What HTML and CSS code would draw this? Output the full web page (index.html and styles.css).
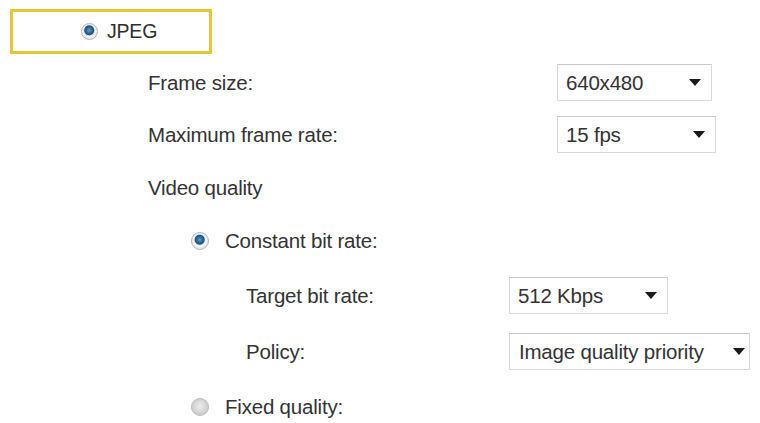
FILE: index.html
```html
<!DOCTYPE html>
<html>
<head>
  <meta charset="utf-8">
  <meta name="viewport" content="width=device-width, initial-scale=1">
  <title>Video settings</title>
  <link rel="stylesheet" href="styles.css">
</head>
<body>
  <div class="format">
    <span class="radio checked"></span>
    <span class="format-name">JPEG</span>
  </div>

  <div class="settings">
    <div class="field">
      <span class="label">Frame size:</span>
      <div class="select size-sm"><span>640x480</span><i class="arrow"></i></div>
    </div>
    <div class="field field-rate">
      <span class="label">Maximum frame rate:</span>
      <div class="select size-md"><span>15 fps</span><i class="arrow"></i></div>
    </div>
    <div class="heading">Video quality</div>

    <div class="quality">
      <div class="option option-cbr">
        <span class="radio checked"></span>
        <span class="label">Constant bit rate:</span>
      </div>
      <div class="sub">
        <div class="field sub-field">
          <span class="label">Target bit rate:</span>
          <div class="select size-md"><span>512 Kbps</span><i class="arrow"></i></div>
        </div>
        <div class="field sub-field field-policy">
          <span class="label">Policy:</span>
          <div class="select size-lg"><span>Image quality priority</span><i class="arrow"></i></div>
        </div>
      </div>
      <div class="option option-fixed">
        <span class="radio"></span>
        <span class="label">Fixed quality:</span>
      </div>
    </div>
  </div>
</body>
</html>
```

FILE: styles.css
```css
* {
  margin: 0;
  padding: 0;
  box-sizing: border-box;
}

html, body {
  height: 100%;
  overflow: hidden;
}

body {
  background: #fff;
  color: #333;
  font-family: "Liberation Sans", Arial, sans-serif;
  font-size: 20.5px;
  letter-spacing: -0.2px;
}

/* selected format, framed */
.format {
  display: flex;
  align-items: center;
  gap: 9px;
  width: 202px;
  height: 45px;
  margin: 9px 0 0 10px;
  padding-left: 68px;
  border: 3px solid #e7c535;
}

.format-name {
  font-size: 19.5px;
  color: #2e2e2e;
}

/* radio buttons */
.radio {
  display: inline-block;
  width: 18px;
  height: 18px;
  border-radius: 50%;
  border: 1px solid #b9bcc0;
  background: radial-gradient(circle at 50% 45%, #ececec 0, #d4d4d4 55%, #c2c2c2 100%);
  flex-shrink: 0;
}

.radio.checked {
  border-color: #aeb7c0;
  background: radial-gradient(circle at 48% 42%, #5f9cc4 0, #2c6892 3px, #1f5279 4.5px, #e6ebf0 5.5px, #f3f5f7 6.5px, #cdd4db 100%);
}

.format .radio {
  width: 17px;
  height: 17px;
}

/* fields */
.settings {
  padding-left: 148px;
}

.field {
  display: grid;
  grid-template-columns: 409px auto;
  align-items: center;
  margin-top: 10px;
}

.field-rate {
  margin-top: 15px;
}

.heading {
  display: flex;
  align-items: center;
  height: 37px;
  margin-top: 16px;
}

.option {
  display: flex;
  align-items: center;
  gap: 16px;
  margin-left: 43px;
  height: 37px;
}

.option-cbr {
  margin-top: 16px;
}

.option-fixed {
  margin-top: 22px;
  height: 30px;
}

.sub {
  padding-left: 98px;
}

.sub-field {
  grid-template-columns: 263px auto;
  margin-top: 18px;
}

.field-policy {
  margin-top: 19px;
}

/* drop-down boxes */
.select {
  display: flex;
  align-items: center;
  justify-content: space-between;
  height: 37px;
  padding: 0 10px 0 8px;
  border: 1px solid #d9d9d9;
  border-top-color: #c8c8c8;
  background: #fff;
  color: #333;
}

.size-sm {
  width: 155px;
}

.size-md {
  width: 159px;
}

.size-lg {
  width: 241px;
  padding-left: 9px;
  padding-right: 4px;
}

.arrow {
  width: 0;
  height: 0;
  border-left: 6.5px solid transparent;
  border-right: 6.5px solid transparent;
  border-top: 7px solid #1a1a1a;
}
```
